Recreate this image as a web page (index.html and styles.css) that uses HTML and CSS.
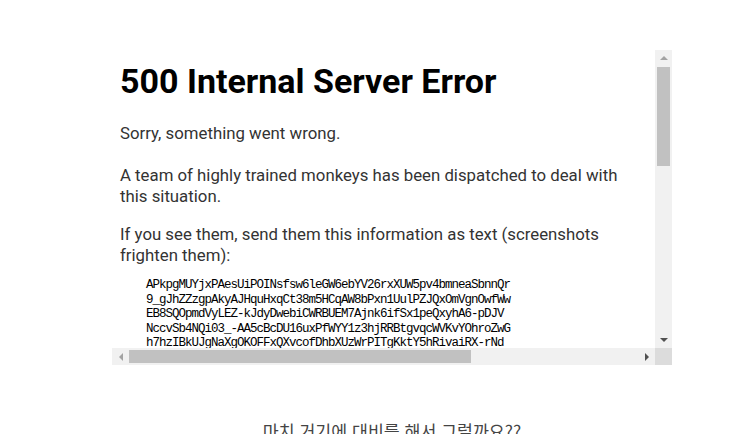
FILE: index.html
```html
<!DOCTYPE html>
<html lang="ko">
  <head>
    <meta charset="UTF-8" />
    <meta name="viewport" content="width=device-width, initial-scale=1.0" />
    <title>Document</title>
    <link rel="stylesheet" href="styles.css">
  </head>

  <body>
    <div class="column">
      <div class="frame">
        <div class="view">
          <div class="doc">
            <h1>500 Internal Server Error</h1>
            <p class="first">Sorry, something went wrong.</p>
            <p>A team of highly trained monkeys has been dispatched to deal with this situation.</p>
            <p>If you see them, send them this information as text (screenshots frighten them):</p>
            <pre class="dump">APkpgMUYjxPAesUiPOINsfsw6leGW6ebYV26rxXUW5pv4bmneaSbnnQr
9_gJhZZzgpAkyAJHquHxqCt38m5HCqAW8bPxn1UulPZJQxOmVgnOwfWw
EB8SQOpmdVyLEZ-kJdyDwebiCWRBUEM7Ajnk6ifSx1peQxyhA6-pDJV
NccvSb4NQi03_-AA5cBcDU16uxPfWYY1z3hjRRBtgvqcWVKvYOhroZwG
h7hzIBkUJgNaXgOKOFFxQXvcofDhbXUzWrPITgKktY5hRivaiRX-rNd
q4mVd8LzPeR2oXc0Tn9bYhKsJ1aGwFu7iE3lMzQxSvC5yBtN6pHgDrU</pre>
          </div>
        </div>
        <!-- vertical scrollbar -->
        <div class="vbar">
          <div class="btn"><span class="arrow up off"></span></div>
          <div class="track">
            <div class="thumb"></div>
          </div>
          <div class="btn"><span class="arrow down"></span></div>
        </div>
        <!-- horizontal scrollbar -->
        <div class="hbar">
          <div class="btn"><span class="arrow left off"></span></div>
          <div class="track">
            <div class="thumb"></div>
          </div>
          <div class="btn"><span class="arrow right"></span></div>
        </div>
        <div class="corner"></div>
      </div>
      <p class="caption">마치 거기에 대비를 해서 그럴까요??</p>
    </div>
  </body>
</html>
```

FILE: styles.css
```css
* {
  padding: 0;
  margin: 0;
}

body {
  background-color: #fff;
  font-family: Roboto, "Noto Sans", sans-serif;
  overflow: hidden;
}

.column {
  width: 560px;
  margin: 50px 0 0 112px;
}

.frame {
  display: grid;
  grid-template-columns: 543px 17px;
  grid-template-rows: 298px 17px;
  width: 560px;
  height: 315px;
}

.view {
  overflow: hidden;
  background-color: #fff;
}

.doc {
  padding: 10px 0 0 8px;
  width: 515px;
  color: #333;
}

h1 {
  font-size: 34px;
  line-height: 42px;
  font-weight: bold;
  color: #000;
  margin-bottom: 21px;
}

.doc p {
  font-size: 16.8px;
  line-height: 21px;
  margin-bottom: 17px;
}

.doc p.first {
  margin-bottom: 21px;
}

.dump {
  font-family: "Liberation Mono", monospace;
  font-size: 12.5px;
  line-height: 14.5px;
  letter-spacing: -1px;
  margin: -5px 0 0 26px;
  color: #000;
  white-space: pre;
}

/* fake scrollbars */
.vbar,
.hbar {
  display: flex;
  background-color: #f1f1f1;
}

.vbar {
  flex-direction: column;
}

.btn {
  width: 17px;
  height: 17px;
  flex: none;
  display: flex;
  justify-content: center;
  align-items: center;
}

.track {
  flex: 1;
  display: flex;
  padding: 0 2px;
}

.hbar .track {
  padding: 2px 0;
}

.vbar .thumb {
  width: 100%;
  height: 99px;
  background-color: #c1c1c1;
}

.hbar .thumb {
  height: 100%;
  width: 342px;
  background-color: #c1c1c1;
}

.corner {
  background-color: #dcdcdc;
}

.arrow {
  width: 0;
  height: 0;
  border: 4px solid transparent;
}

.arrow.up {
  border-bottom-color: #505050;
  border-top-width: 0;
  margin-top: -1px;
}

.arrow.down {
  border-top-color: #505050;
  border-bottom-width: 0;
  margin-top: 1px;
}

.arrow.left {
  border-right-color: #505050;
  border-left-width: 0;
}

.arrow.right {
  border-left-color: #505050;
  border-right-width: 0;
  margin-left: 1px;
}

.arrow.up.off {
  border-bottom-color: #a3a3a3;
}

.arrow.left.off {
  border-right-color: #a3a3a3;
}

.caption {
  margin-top: 54px;
  text-align: center;
  font-family: "Noto Sans CJK KR", sans-serif;
  font-size: 17.3px;
  line-height: 24px;
  color: #444;
}
```
